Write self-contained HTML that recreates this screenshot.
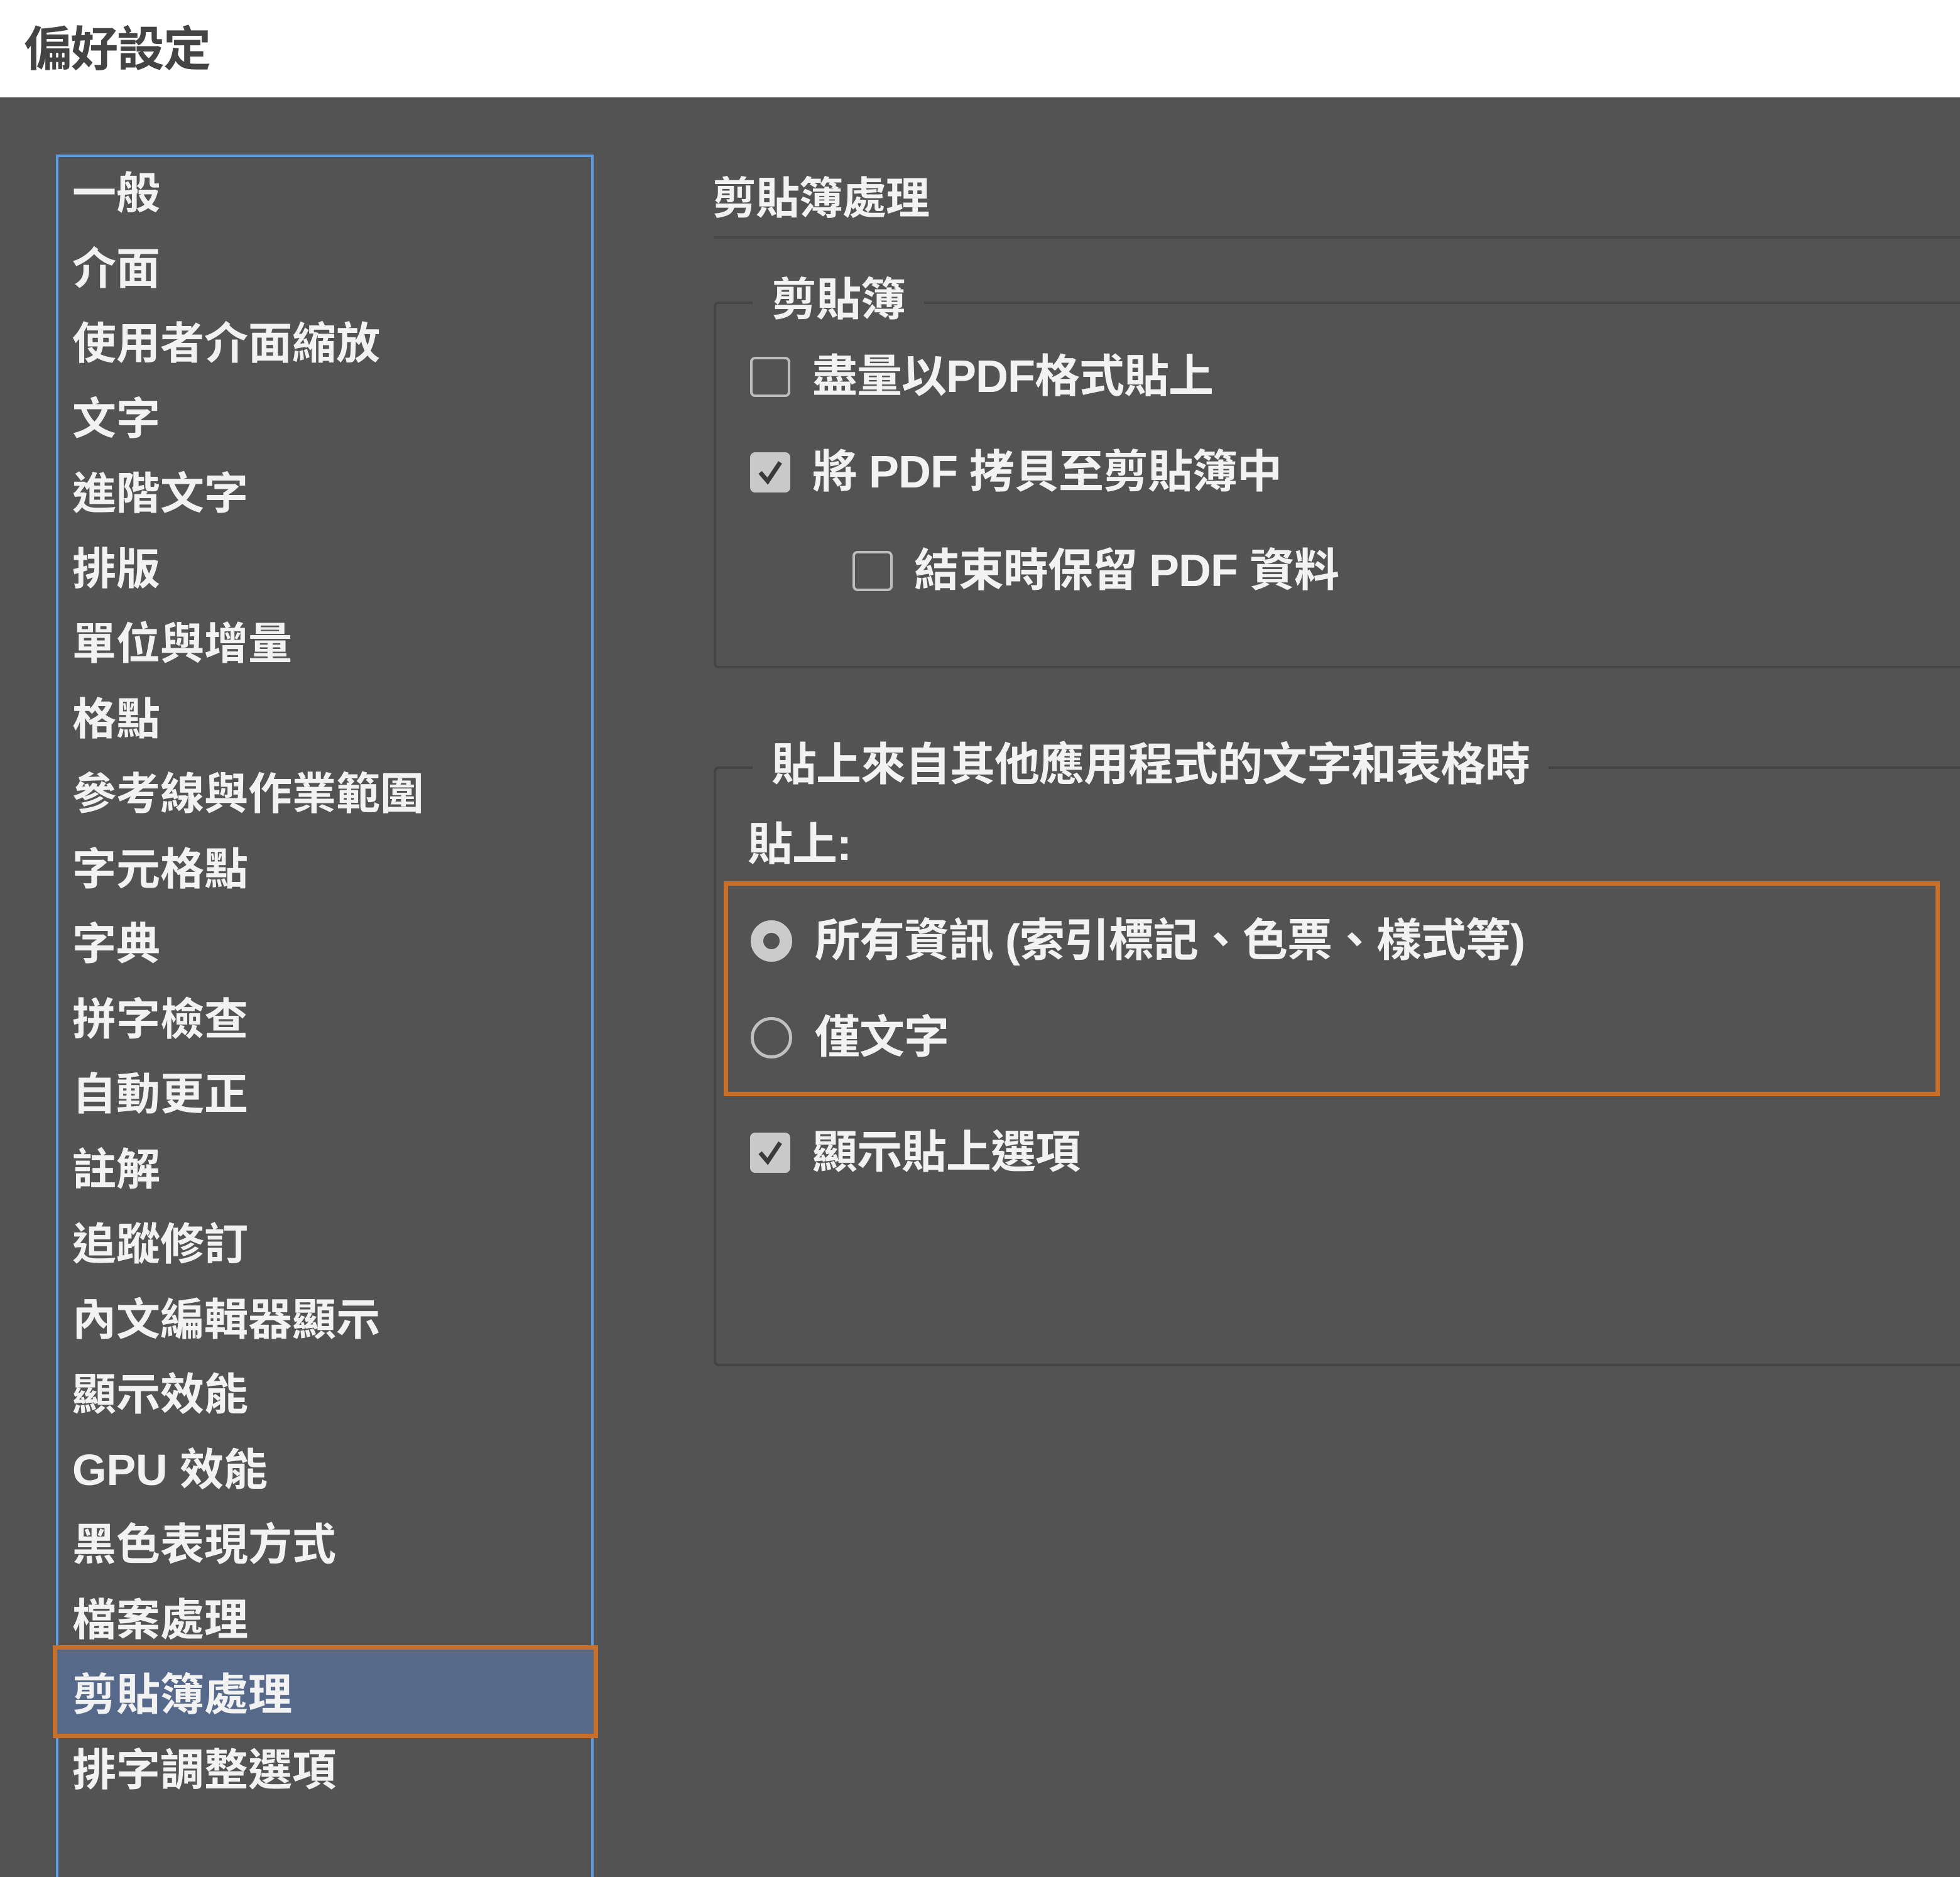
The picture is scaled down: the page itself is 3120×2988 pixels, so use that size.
<!DOCTYPE html>
<html><head><meta charset="utf-8"><style>
*{margin:0;padding:0;box-sizing:border-box}
html,body{width:3120px;height:2988px;overflow:hidden;background:#535353}
body{position:relative;font-family:"Liberation Sans","Noto Sans CJK TC",sans-serif;font-weight:bold;color:#f2f2f2}
.hdr{position:absolute;left:0;top:0;width:3120px;height:155px;background:#fff}
.title{position:absolute;left:38px;top:20px;font-size:76px;line-height:120px;color:#444;letter-spacing:-2px}
.list{position:absolute;left:89px;top:246px;width:856px;height:2800px;border:4px solid #5a9be6}
.it{position:absolute;left:115px;font-size:70px;line-height:100px;white-space:nowrap}
.sel{position:absolute;left:84px;top:2619px;width:868px;height:148px;border:7px solid #c8702a;background:#56698a}
.t{position:absolute;font-size:72px;line-height:100px;white-space:nowrap;letter-spacing:-1px}
.grp{position:absolute;left:1136px;width:2100px;border:4px solid #444;border-radius:8px}
.leg{position:absolute;background:#535353;padding:0 30px}
.cb{position:absolute;width:64px;height:64px;border:4px solid #bdbdbd;border-radius:8px}
.cb.on{background:#c9c9c9;border-color:#c9c9c9}
.rd{position:absolute;width:66px;height:66px;border:5px solid #c0c0c0;border-radius:50%}
.rd.on{border:20px solid #cbcbcb;background:#535353}
</style></head><body>
<div class="hdr"></div>
<div class="title">偏好設定</div>
<div class="list"></div>
<div class="sel"></div>
<div class="it" style="top:258px">一般</div>
<div class="it" style="top:378px">介面</div>
<div class="it" style="top:497px">使用者介面縮放</div>
<div class="it" style="top:617px">文字</div>
<div class="it" style="top:736px">進階文字</div>
<div class="it" style="top:856px">排版</div>
<div class="it" style="top:975px">單位與增量</div>
<div class="it" style="top:1095px">格點</div>
<div class="it" style="top:1214px">參考線與作業範圍</div>
<div class="it" style="top:1334px">字元格點</div>
<div class="it" style="top:1453px">字典</div>
<div class="it" style="top:1573px">拼字檢查</div>
<div class="it" style="top:1692px">自動更正</div>
<div class="it" style="top:1812px">註解</div>
<div class="it" style="top:1931px">追蹤修訂</div>
<div class="it" style="top:2051px">內文編輯器顯示</div>
<div class="it" style="top:2170px">顯示效能</div>
<div class="it" style="top:2290px">GPU 效能</div>
<div class="it" style="top:2409px">黑色表現方式</div>
<div class="it" style="top:2529px">檔案處理</div>
<div class="it" style="top:2648px">剪貼簿處理</div>
<div class="it" style="top:2768px">排字調整選項</div>

<div class="t" style="left:1134px;top:266px;font-size:70px">剪貼簿處理</div>
<div style="position:absolute;left:1136px;top:376px;width:2000px;height:4px;background:#474747"></div>

<div class="grp" style="top:480px;height:584px"></div>
<div class="t leg" style="left:1198px;top:428px">剪貼簿</div>
<div class="cb" style="left:1194px;top:568px"></div>
<div class="t" style="left:1293px;top:550px">盡量以PDF格式貼上</div>
<div class="cb on" style="left:1194px;top:720px"><svg width="56" height="56" viewBox="0 0 56 56" style="position:absolute;left:0;top:0"><path d="M12 28 L24 42 L44 12" fill="none" stroke="#3a3a3a" stroke-width="7"/></svg></div>
<div class="t" style="left:1293px;top:702px">將 PDF 拷貝至剪貼簿中</div>
<div class="cb" style="left:1357px;top:877px"></div>
<div class="t" style="left:1455px;top:859px">結束時保留 PDF 資料</div>

<div class="grp" style="top:1220px;height:955px"></div>
<div class="t leg" style="left:1198px;top:1168px">貼上來自其他應用程式的文字和表格時</div>
<div class="t" style="left:1190px;top:1295px">貼上:</div>
<div style="position:absolute;left:1152px;top:1403px;width:1936px;height:342px;border:7px solid #c8702a"></div>
<div class="rd on" style="left:1195px;top:1465px"></div>
<div class="t" style="left:1297px;top:1448px">所有資訊 (索引標記、色票、樣式等)</div>
<div class="rd" style="left:1195px;top:1619px"></div>
<div class="t" style="left:1297px;top:1602px">僅文字</div>
<div class="cb on" style="left:1194px;top:1803px"><svg width="56" height="56" viewBox="0 0 56 56" style="position:absolute;left:0;top:0"><path d="M12 28 L24 42 L44 12" fill="none" stroke="#3a3a3a" stroke-width="7"/></svg></div>
<div class="t" style="left:1293px;top:1785px">顯示貼上選項</div>
</body></html>
